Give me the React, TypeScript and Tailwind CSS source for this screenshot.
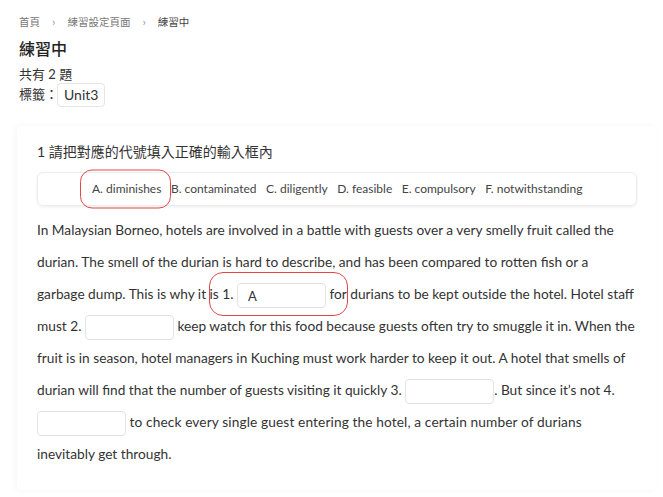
import React from 'react';

const options = [
  'A. diminishes',
  'B. contaminated',
  'C. diligently',
  'D. feasible',
  'E. compulsory',
  'F. notwithstanding',
];

const Blank: React.FC<{ value?: string }> = ({ value }) => (
  <input
    readOnly
    value={value ?? ''}
    className="inline-block h-[25px] w-[89px] rounded border border-[#e3e3e3] bg-white px-[10px] align-middle text-[13px] text-[#333] outline-none"
  />
);

export default function App() {
  return (
    <div
      className="min-h-[497px] bg-white pt-[13px] pr-[6px] pl-[17px] text-[#333]"
      style={{ fontFamily: 'Lato, "Noto Sans CJK TC", sans-serif' }}
    >
      {/* Breadcrumb */}
      <nav className="ml-[2px] flex items-center gap-[12px] text-[10.5px] leading-[18px] text-[#777]">
        <span>首頁</span>
        <span className="text-[12px] text-[#999]">›</span>
        <span>練習設定頁面</span>
        <span className="text-[12px] text-[#999]">›</span>
        <span className="text-[#444]">練習中</span>
      </nav>

      <h1 className="mt-[6px] ml-[2px] text-[16px] font-medium leading-[24px] text-[#222]">練習中</h1>

      <div className="mt-[4px] ml-[2px] text-[13px] leading-[18px]">共有 2 題</div>
      <div className="ml-[2px] flex items-center text-[13px]">
        <span>標籤：</span>
        <span className="ml-[-1px] rounded border border-[#e5e5e5] px-[6px] py-[2px] text-[14px] leading-[18px]">Unit3</span>
      </div>

      {/* Question card */}
      <div className="mt-[19px] rounded-sm bg-white px-[20px] pt-[16px] pb-[20px] shadow-[-2px_0_6px_rgba(0,0,0,0.04)]">
        <div className="text-[14px] leading-[20px] text-[#333]">1 請把對應的代號填入正確的輸入框內</div>

        <div className="mt-[10px] flex h-[34px] items-center gap-[9.5px] rounded-md border border-[#ececec] pl-[54px] text-[12px] text-[#444] shadow-[0_1px_3px_rgba(0,0,0,0.08)]">
          {options.map((o, i) => (
            <span key={o} className="relative">
              {o}
              {i === 0 && (
                <span className="pointer-events-none absolute top-1/2 left-[-12px] right-[-10px] h-[39px] -translate-y-1/2 rounded-[12px] border border-[#e04848]" />
              )}
            </span>
          ))}
        </div>

        <p className="mt-[8px] text-[13.7px] leading-[32px] text-[#333]">
          In Malaysian Borneo, hotels are involved in a battle with guests over a very smelly fruit called the
          durian. The smell of the durian is hard to describe, and has been compared to rotten fish or a garbage
          dump. This is why it{' '}
          <span className="relative">
            is 1. <Blank value="A" /> for
            <span className="pointer-events-none absolute top-1/2 left-[-1px] right-[-1px] h-[44px] -translate-y-1/2 rounded-[14px] border border-[#e04848]" />
          </span>{' '}
          durians to be kept outside the hotel. Hotel staff must 2. <Blank /> keep watch for this food because
          guests often try to smuggle it in. When the fruit is in season, hotel managers in Kuching must work
          harder to keep it out. A hotel that smells of durian will find that the number of guests visiting it
          quickly 3. <Blank />. But since it’s not 4. <Blank />{' '}
          <span className="tracking-[0.12px]">
            to check every single guest entering the hotel, a certain number of durians
          </span>{' '}
          inevitably get through.
        </p>
      </div>
    </div>
  );
}
